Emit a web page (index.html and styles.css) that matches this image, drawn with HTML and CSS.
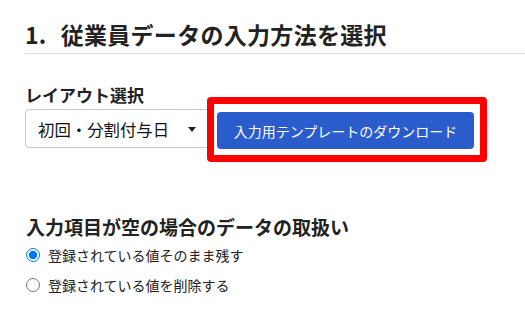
FILE: index.html
```html
<!DOCTYPE html>
<html lang="ja">
<head>
<meta charset="utf-8">
<title>従業員データの入力方法を選択</title>
<link rel="stylesheet" href="styles.css">
</head>
<body>
<main class="page">
  <h1 class="title"><span class="title-num">1.</span>従業員データの入力方法を選択</h1>

  <section class="layout-block">
    <div class="field-label">レイアウト選択</div>
    <div class="field-row">
      <div class="select">
        <span class="select-text">初回・分割付与日</span>
        <span class="select-arrow"></span>
      </div>
      <button class="btn-download" type="button">入力用テンプレートのダウンロード</button>
      <div class="highlight"></div>
    </div>
  </section>

  <section class="empty-block">
    <h2 class="subtitle">入力項目が空の場合のデータの取扱い</h2>
    <label class="radio-row"><input type="radio" name="empty" checked><span>登録されている値そのまま残す</span></label>
    <label class="radio-row"><input type="radio" name="empty"><span>登録されている値を削除する</span></label>
  </section>
</main>
</body>
</html>
```

FILE: styles.css
```css
* { box-sizing: border-box; }

html, body {
  margin: 0;
  padding: 0;
  background: #ffffff;
}

body {
  font-family: "Noto Sans CJK JP", "Noto Sans", sans-serif;
  color: #212529;
}

.page {
  padding: 18px 0 0 25px;
}

.title {
  margin: 0;
  font-size: 23px;
  font-weight: 700;
  line-height: 32px;
  letter-spacing: 0.3px;
  padding: 0 0 3px 0;
  border-bottom: 1px solid #dedede;
  color: #222222;
}

.title-num {
  margin-right: 14px;
}

.layout-block {
  margin-top: 29px;
}

.field-label {
  font-size: 17px;
  font-weight: 700;
  line-height: 24px;
  color: #222222;
}

.field-row {
  position: relative;
  display: flex;
  align-items: flex-start;
  gap: 7px;
  margin-top: 2px;
}

.select {
  width: 185px;
  height: 39px;
  display: flex;
  align-items: center;
  justify-content: space-between;
  padding: 0 13px 0 12px;
  border: 1px solid #c8c8c8;
  border-radius: 4px;
  background: #ffffff;
  font-size: 16.4px;
  color: #111111;
}

.select-arrow {
  width: 0;
  height: 0;
  border-left: 4px solid transparent;
  border-right: 4px solid transparent;
  border-top: 5px solid #222222;
  margin-top: 2px;
}

.btn-download {
  margin-top: 3px;
  width: 257px;
  height: 37px;
  border: none;
  border-radius: 4px;
  background: #2b5ccb;
  color: #ffffff;
  font-family: inherit;
  font-size: 14px;
  padding: 0;
  cursor: pointer;
}

.highlight {
  position: absolute;
  left: 182px;
  top: -12px;
  width: 280px;
  height: 65px;
  border: 7px solid #ff0000;
  border-radius: 4px;
  pointer-events: none;
}

.empty-block {
  margin-top: 64px;
}

.subtitle {
  margin: 0;
  font-size: 19px;
  font-weight: 700;
  line-height: 27px;
  padding-left: 1px;
  color: #222222;
}

.radio-row {
  display: flex;
  align-items: center;
  height: 30px;
  font-size: 14px;
  color: #222222;
}

.radio-row input {
  margin: 0 8px 0 1px;
  width: 14px;
  height: 14px;
  accent-color: #0075ff;
}
```
